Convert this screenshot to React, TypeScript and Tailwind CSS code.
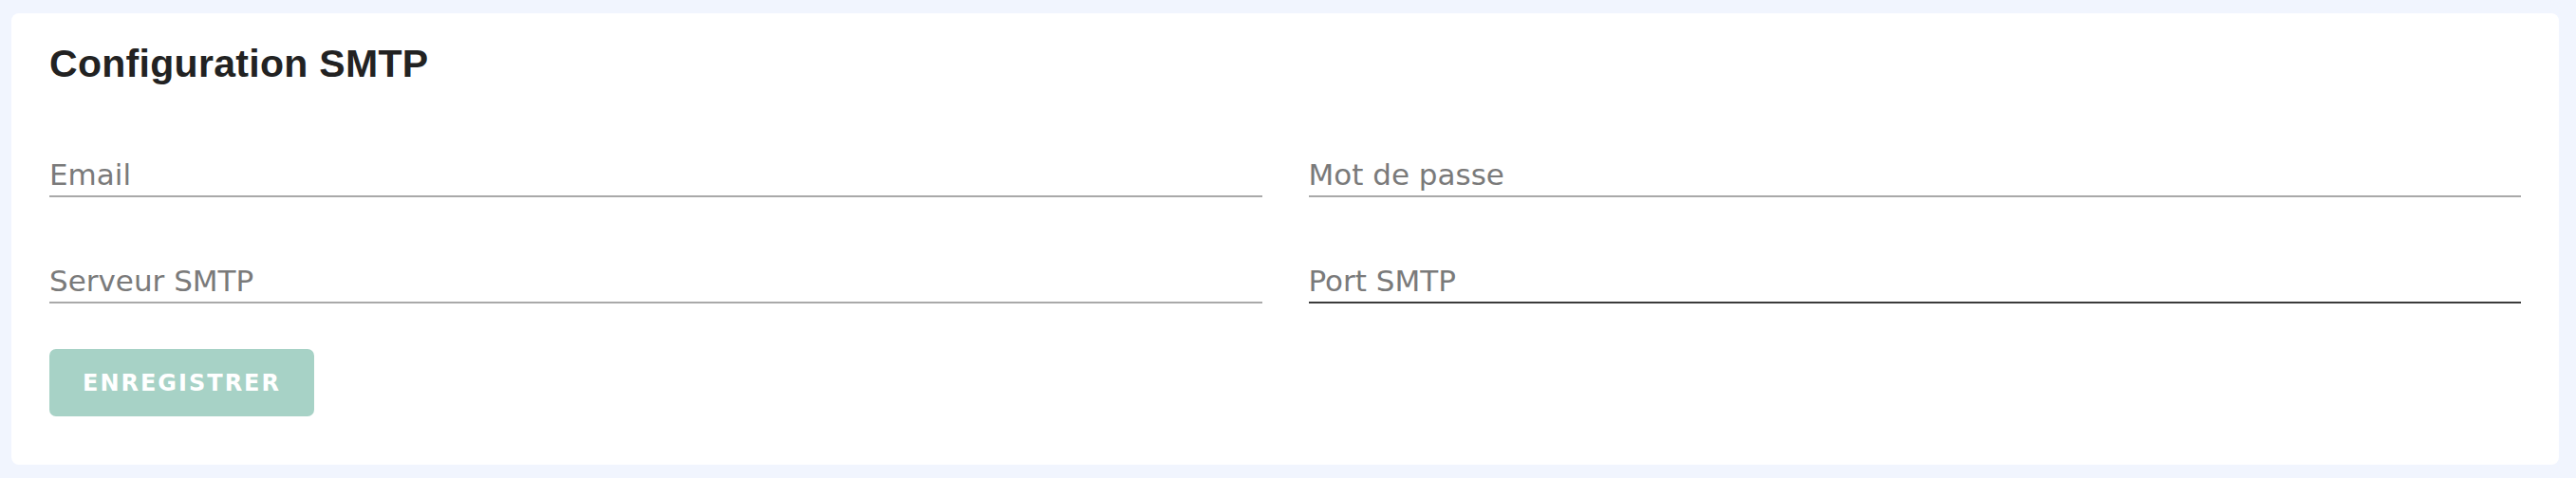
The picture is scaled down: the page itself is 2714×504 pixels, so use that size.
import React from 'react';

interface Field {
  label: string;
  active?: boolean;
}

const fields: Field[] = [
  { label: 'Email' },
  { label: 'Mot de passe' },
  { label: 'Serveur SMTP' },
  { label: 'Port SMTP', active: true },
];

const TextField: React.FC<Field> = ({ label, active }) => (
  <div
    className={`pb-[3px] border-b-2 ${active ? 'border-[#3b3b3b]' : 'border-[#a9a9a9]'}`}
  >
    <span className="block font-['DejaVu_Sans',sans-serif] text-[31px] leading-[37px] text-[#7a7a7a]">
      {label}
    </span>
  </div>
);

const App: React.FC = () => {
  return (
    <div className="min-h-screen bg-[#f1f5fe] pt-[14px] pb-[14px] pl-[12px] pr-[18px]">
      <div className="bg-white rounded-[8px] px-[40px] pt-[29px] pb-[51px]">
        <h2 className="font-['Liberation_Sans',Arial,sans-serif] font-bold text-[41px] leading-[48px] tracking-[0.3px] text-[#222222]">
          Configuration SMTP
        </h2>

        {/* Form fields */}
        <div className="grid grid-cols-2 gap-x-[49px] gap-y-[70px] mt-[75px]">
          {fields.map((f) => (
            <TextField key={f.label} label={f.label} active={f.active} />
          ))}
        </div>

        <button
          type="button"
          className="mt-[48px] w-[279px] h-[71px] rounded-[7px] bg-[#a7d2c6] text-white font-['DejaVu_Sans',sans-serif] font-bold text-[24px] tracking-[2px] flex items-center justify-center"
        >
          ENREGISTRER
        </button>
      </div>
    </div>
  );
};

export default App;
